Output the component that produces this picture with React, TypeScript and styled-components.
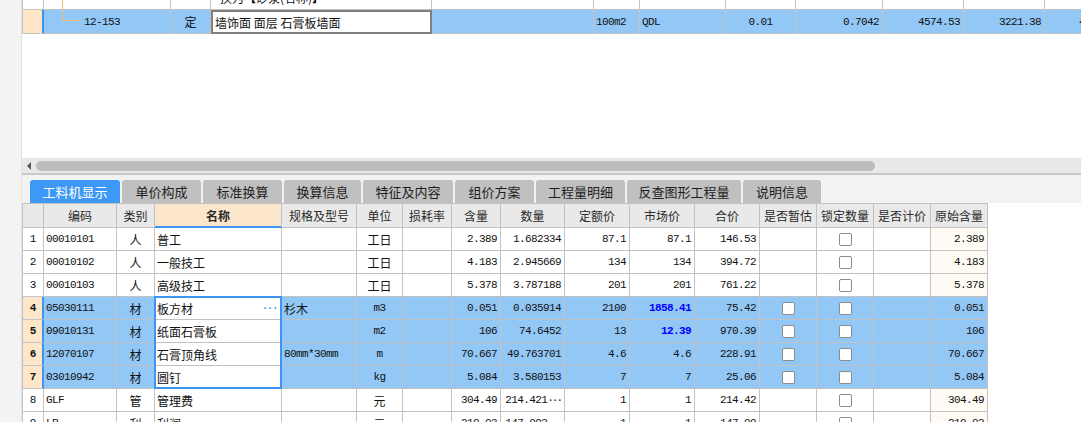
import React from 'react';
import styled, { createGlobalStyle, css } from 'styled-components';

const GlobalStyle = createGlobalStyle`
  html, body { margin: 0; padding: 0; background: #ffffff; overflow: hidden; }
  body {
    font-family: "Noto Sans CJK SC", "Liberation Sans", sans-serif;
    font-size: 12px;
    color: #111111;
  }
  * { box-sizing: border-box; }
`;

const MONO = `"Liberation Mono", "Noto Sans CJK SC", monospace`;
const CJK = `"Noto Sans CJK SC", "Liberation Sans", sans-serif`;
const GRID = '#c2c2c2';
const SEL_BLUE = '#93c7f6';
const PEACH = '#fee6c9';
const ACCENT = '#3d95f3';

const isAscii = (s: string) => /^[\x00-\x7f]*$/.test(s);

/* ---------- page frame ---------- */
const Page = styled.div`
  display: flex;
  width: 1081px;
  height: 422px;
  overflow: hidden;
`;

const LeftStrip = styled.div`
  flex: none;
  width: 22px;
  background: #f3f3f3;
  border-right: 1px solid #e2e2e2;
`;

const Main = styled.div`
  flex: 1;
  min-width: 0;
  display: flex;
  flex-direction: column;
`;

/* ---------- top (upper grid, scrolled) ---------- */
const TopPane = styled.div`
  flex: none;
  height: 158px;
  overflow: hidden;
  background: #ffffff;
`;

const TopGrid = styled.div`
  margin-top: -14px;
  display: flex;
  flex-direction: column;
  border-left: 1px solid ${GRID};
`;

const TopRow = styled.div<{ $sel?: boolean }>`
  display: grid;
  grid-template-columns: 21px 127px 40px 221px 162px 46px 86px 70px 87px 81px 81px 80px;
  height: 24px;
  background: ${(p) => (p.$sel ? SEL_BLUE : '#ffffff')};
`;

type Align = 'left' | 'center' | 'right';

const cellBase = css<{ $align?: Align; $mono?: boolean }>`
  position: relative;
  display: flex;
  align-items: center;
  justify-content: ${(p) =>
    p.$align === 'right' ? 'flex-end' : p.$align === 'center' ? 'center' : 'flex-start'};
  padding: ${(p) => (p.$align === 'right' ? '0 3px 0 0' : p.$align === 'center' ? '0' : '0 0 0 2px')};
  border-right: 1px solid ${GRID};
  border-bottom: 1px solid ${GRID};
  white-space: nowrap;
  overflow: hidden;
  font-family: ${(p) => (p.$mono ? MONO : CJK)};
  font-size: ${(p) => (p.$mono ? '11px' : '12px')};
  letter-spacing: ${(p) => (p.$mono ? '-0.6px' : '0')};
`;

const TopCell = styled.div<{ $align?: Align; $mono?: boolean; $pad?: number }>`
  ${cellBase};
  ${(p) => p.$pad !== undefined && css`padding-left: ${p.$pad}px;`}
`;

const RowHead = styled.div<{ $sel?: boolean }>`
  display: flex;
  align-items: center;
  justify-content: center;
  border-right: 1px solid ${(p) => (p.$sel ? ACCENT : GRID)};
  border-bottom: 1px solid ${GRID};
  background: ${(p) => (p.$sel ? PEACH : '#ffffff')};
  box-shadow: ${(p) => (p.$sel ? `inset -1px 0 0 ${ACCENT}` : 'none')};
  font-family: ${MONO};
  font-size: 11px;
  font-weight: ${(p) => (p.$sel ? 700 : 400)};
`;

const EditBox = styled.div`
  display: flex;
  align-items: center;
  padding-left: 2px;
  background: #ffffff;
  border: 2px solid #7f7f7f;
  font-family: ${CJK};
  font-size: 12px;
  white-space: nowrap;
  overflow: hidden;
`;

const TreeLine = styled.span<{ $elbow?: boolean }>`
  position: absolute;
  left: 18px;
  top: 0;
  width: 17px;
  height: ${(p) => (p.$elbow ? '11px' : '100%')};
  border-left: 1px solid #f3bd6a;
  border-bottom: ${(p) => (p.$elbow ? '1px solid #f3bd6a' : 'none')};
`;

/* ---------- horizontal scrollbar ---------- */
const HScroll = styled.div`
  flex: none;
  height: 17px;
  display: flex;
  align-items: center;
  padding-left: 5px;
  background: #e8e8e8;
  border-bottom: 2px solid #c9c9c9;
`;

const ArrowLeft = styled.span`
  width: 0;
  height: 0;
  border-top: 4px solid transparent;
  border-bottom: 4px solid transparent;
  border-right: 4px solid #555555;
`;

const Thumb = styled.span`
  margin-left: 5px;
  width: 839px;
  height: 10px;
  border-radius: 5px;
  background: #bdbdbd;
`;

/* ---------- tabs ---------- */
const TabBar = styled.div`
  flex: none;
  height: 28px;
  display: flex;
  align-items: flex-end;
  gap: 2px;
  padding-left: 8px;
  background: #f2f2f2;
`;

const Tab = styled.div<{ $active?: boolean; $w: number }>`
  width: ${(p) => p.$w}px;
  height: 23px;
  display: flex;
  align-items: center;
  justify-content: center;
  border-radius: 3px 3px 0 0;
  background: ${(p) => (p.$active ? '#3e98f5' : '#c0c0c0')};
  color: ${(p) => (p.$active ? '#ffffff' : '#1e1e1e')};
  font-family: ${CJK};
  font-size: 13px;
`;

/* ---------- lower table ---------- */
const Table = styled.div`
  width: 966px;
  display: flex;
  flex-direction: column;
  border-left: 1px solid ${GRID};
  border-top: 1px solid ${GRID};
`;

const COLS = '21px 73px 38px 127px 75px 46px 49px 49px 64px 65px 65px 65px 57px 57px 57px 57px';

const HeadRow = styled.div`
  display: grid;
  grid-template-columns: ${COLS};
  height: 24px;
  background: #e9e9e9;
`;

const HeadCell = styled.div<{ $active?: boolean }>`
  display: flex;
  align-items: center;
  justify-content: center;
  border-right: 1px solid ${GRID};
  border-bottom: ${(p) => (p.$active ? `2px solid ${ACCENT}` : `1px solid ${GRID}`)};
  background: ${(p) => (p.$active ? '#fde7cc' : 'transparent')};
  font-family: ${CJK};
  font-size: 12px;
  font-weight: ${(p) => (p.$active ? 700 : 400)};
  color: #2a2a2a;
  white-space: nowrap;
`;

const BodyRow = styled.div<{ $sel?: boolean }>`
  display: grid;
  grid-template-columns: ${COLS};
  height: 23px;
  flex: none;
  background: ${(p) => (p.$sel ? SEL_BLUE : '#ffffff')};
`;

const Cell = styled.div<{ $align?: Align; $mono?: boolean; $bg?: string; $strong?: boolean }>`
  ${cellBase};
  ${(p) => p.$bg && css`background: ${p.$bg};`}
  ${(p) => p.$strong && css`color: #0000ff; font-weight: 700;`}
`;

const NameCell = styled.div<{ $sel?: boolean; $first?: boolean; $last?: boolean }>`
  ${cellBase};
  justify-content: space-between;
  padding: 0 4px 0 2px;
  ${(p) =>
    p.$sel &&
    css`
      background: #ffffff;
      overflow: visible;
      &::after {
        content: '';
        position: absolute;
        top: -1px;
        bottom: -1px;
        left: -1px;
        right: -1px;
        border-left: 2px solid ${ACCENT};
        border-right: 2px solid ${ACCENT};
        border-top: ${p.$first ? `2px solid ${ACCENT}` : 'none'};
        border-bottom: ${p.$last ? `2px solid ${ACCENT}` : 'none'};
        pointer-events: none;
      }
    `}
`;

const MoreDots = styled.span`
  font-family: ${MONO};
  font-size: 11px;
  font-weight: 700;
  letter-spacing: -1.5px;
  color: #4a8fdc;
`;

const Ellipsis = styled.span`
  letter-spacing: -2px;
`;

const Check = styled.span`
  display: inline-block;
  width: 13px;
  height: 13px;
  border: 1px solid #8c8c8c;
  border-radius: 2px;
  background: #ffffff;
`;

type RowData = {
  n: string;
  code: string;
  cat: string;
  name: string;
  spec: string;
  unit: string;
  qty: string;
  amount: string;
  amountMore?: boolean;
  quota: string;
  market: string;
  marketStrong?: boolean;
  total: string;
  est: boolean;
  lock: boolean;
  orig: string;
  sel?: boolean;
  dots?: boolean;
};

const rows: RowData[] = [
  { n: '1', code: '00010101', cat: '人', name: '普工', spec: '', unit: '工日', qty: '2.389', amount: '1.682334', quota: '87.1', market: '87.1', total: '146.53', est: false, lock: true, orig: '2.389' },
  { n: '2', code: '00010102', cat: '人', name: '一般技工', spec: '', unit: '工日', qty: '4.183', amount: '2.945669', quota: '134', market: '134', total: '394.72', est: false, lock: true, orig: '4.183' },
  { n: '3', code: '00010103', cat: '人', name: '高级技工', spec: '', unit: '工日', qty: '5.378', amount: '3.787188', quota: '201', market: '201', total: '761.22', est: false, lock: true, orig: '5.378' },
  { n: '4', code: '05030111', cat: '材', name: '板方材', spec: '杉木', unit: 'm3', qty: '0.051', amount: '0.035914', quota: '2100', market: '1858.41', marketStrong: true, total: '75.42', est: true, lock: true, orig: '0.051', sel: true, dots: true },
  { n: '5', code: '09010131', cat: '材', name: '纸面石膏板', spec: '', unit: 'm2', qty: '106', amount: '74.6452', quota: '13', market: '12.39', marketStrong: true, total: '970.39', est: true, lock: true, orig: '106', sel: true },
  { n: '6', code: '12070107', cat: '材', name: '石膏顶角线', spec: '80mm*30mm', unit: 'm', qty: '70.667', amount: '49.763701', quota: '4.6', market: '4.6', total: '228.91', est: true, lock: true, orig: '70.667', sel: true },
  { n: '7', code: '03010942', cat: '材', name: '圆钉', spec: '', unit: 'kg', qty: '5.084', amount: '3.580153', quota: '7', market: '7', total: '25.06', est: true, lock: true, orig: '5.084', sel: true },
  { n: '8', code: 'GLF', cat: '管', name: '管理费', spec: '', unit: '元', qty: '304.49', amount: '214.421', amountMore: true, quota: '1', market: '1', total: '214.42', est: false, lock: true, orig: '304.49' },
  { n: '9', code: 'LR', cat: '利', name: '利润', spec: '', unit: '元', qty: '219.03', amount: '147.093', amountMore: true, quota: '1', market: '1', total: '147.09', est: false, lock: true, orig: '219.03' },
];

const headers = ['', '编码', '类别', '名称', '规格及型号', '单位', '损耗率', '含量', '数量', '定额价', '市场价', '合价', '是否暂估', '锁定数量', '是否计价', '原始含量'];

const tabs: { label: string; w: number }[] = [
  { label: '工料机显示', w: 90 },
  { label: '单价构成', w: 79 },
  { label: '标准换算', w: 79 },
  { label: '换算信息', w: 77 },
  { label: '特征及内容', w: 90 },
  { label: '组价方案', w: 79 },
  { label: '工程量明细', w: 89 },
  { label: '反查图形工程量', w: 114 },
  { label: '说明信息', w: 78 },
];

const selRows = rows.filter((r) => r.sel).map((r) => r.n);

export default function App() {
  return (
    <>
      <GlobalStyle />
      <Page>
        <LeftStrip />
        <Main>
          <TopPane>
            <TopGrid>
              <TopRow>
                <RowHead />
                <TopCell>
                  <TreeLine />
                </TopCell>
                <TopCell />
                <TopCell $pad={9}>换为【砂浆(名称)】</TopCell>
                <TopCell />
                <TopCell />
                <TopCell />
                <TopCell />
                <TopCell />
                <TopCell />
                <TopCell />
                <TopCell />
              </TopRow>
              <TopRow $sel>
                <RowHead $sel />
                <TopCell $mono $pad={40}>
                  <TreeLine $elbow />
                  12-153
                </TopCell>
                <TopCell $align="center">定</TopCell>
                <EditBox>墙饰面 面层 石膏板墙面</EditBox>
                <TopCell />
                <TopCell $mono>100m2</TopCell>
                <TopCell $mono>QDL</TopCell>
                <TopCell $mono $align="center">0.01</TopCell>
                <TopCell $mono $align="right">0.7042</TopCell>
                <TopCell $mono $align="right">4574.53</TopCell>
                <TopCell $mono $align="right">3221.38</TopCell>
                <TopCell $mono $align="right">4574.53</TopCell>
              </TopRow>
            </TopGrid>
          </TopPane>

          <HScroll>
            <ArrowLeft />
            <Thumb />
          </HScroll>

          <TabBar>
            {tabs.map((t, i) => (
              <Tab key={t.label} $w={t.w} $active={i === 0}>
                {t.label}
              </Tab>
            ))}
          </TabBar>

          <Table>
            <HeadRow>
              {headers.map((h, i) => (
                <HeadCell key={i} $active={h === '名称'}>
                  {h}
                </HeadCell>
              ))}
            </HeadRow>
            {rows.map((r) => {
              const sel = !!r.sel;
              return (
                <BodyRow key={r.n} $sel={sel}>
                  <RowHead $sel={sel}>{r.n}</RowHead>
                  <Cell $mono>{r.code}</Cell>
                  <Cell $align="center">{r.cat}</Cell>
                  <NameCell
                    $sel={sel}
                    $first={r.n === selRows[0]}
                    $last={r.n === selRows[selRows.length - 1]}
                  >
                    <span>{r.name}</span>
                    {r.dots && <MoreDots>···</MoreDots>}
                  </NameCell>
                  <Cell $mono={isAscii(r.spec)}>{r.spec}</Cell>
                  <Cell $align="center" $mono={isAscii(r.unit)}>
                    {r.unit}
                  </Cell>
                  <Cell />
                  <Cell $mono $align="right">{r.qty}</Cell>
                  <Cell $mono $align="right">
                    {r.amount}
                    {r.amountMore && <Ellipsis>···</Ellipsis>}
                  </Cell>
                  <Cell $mono $align="right">{r.quota}</Cell>
                  <Cell $mono $align="right" $strong={r.marketStrong}>
                    {r.market}
                  </Cell>
                  <Cell $mono $align="right">{r.total}</Cell>
                  <Cell $align="center">{r.est && <Check />}</Cell>
                  <Cell $align="center">{r.lock && <Check />}</Cell>
                  <Cell />
                  <Cell $mono $align="right" $bg={sel ? undefined : '#fffaf3'}>
                    {r.orig}
                  </Cell>
                </BodyRow>
              );
            })}
          </Table>
        </Main>
      </Page>
    </>
  );
}
